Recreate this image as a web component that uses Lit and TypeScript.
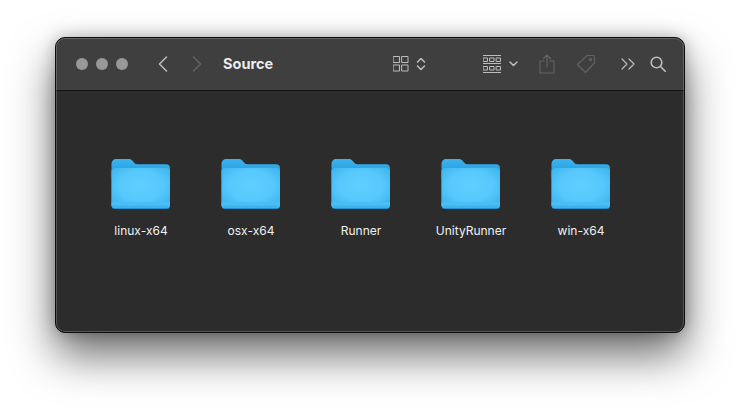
import { LitElement, html, css, svg } from "lit";
import { customElement } from "lit/decorators.js";

const folders = ["linux-x64", "osx-x64", "Runner", "UnityRunner", "win-x64"];

@customElement("app-root")
export class AppRoot extends LitElement {
  static styles = css`
    :host { display: block; width: 740px; height: 406px; background: #fff; overflow: hidden; font-family: Inter, "Liberation Sans", sans-serif; }
    .page { box-sizing: border-box; width: 740px; height: 406px; padding: 37px 55px 0; }
    .window {
      position: relative; box-sizing: border-box; width: 630px; height: 296px; border-radius: 10px; background: #2c2c2c; overflow: hidden;
      border: 1px solid #0c0c0c;
      box-shadow: 0 22px 44px rgba(0,0,0,.58), 0 0 16px rgba(0,0,0,.26);
      display: flex; flex-direction: column;
    }
    .window::after { content: ""; position: absolute; inset: 0; border-radius: 9px; box-shadow: inset 0 0 0 1px rgba(255,255,255,.2); pointer-events: none; }
    .bar {
      height: 52px; background: #3f3f3f; border-bottom: 1px solid #121212;
      display: flex; align-items: center; padding-left: 20px; flex: none;
    }
    .lights { display: flex; gap: 8px; margin-right: 30px; }
    .lights i { width: 12px; height: 12px; border-radius: 50%; background: #989898; display: block; }
    svg { display: block; flex: none; fill: none; stroke-linecap: round; stroke-linejoin: round; }
    .on { stroke: #bdbdbd; }
    .off { stroke: #626262; }
    .title { font-size: 14.5px; font-weight: 700; color: #ececec; width: 170px; margin-left: 21px; line-height: 16px; }
    .files { flex: 1; display: grid; grid-template-columns: repeat(5, 110px); align-content: start; padding: 67px 0 0 30px; }
    .file { display: flex; flex-direction: column; align-items: center; gap: 14px; }
    .file span { font-size: 12px; font-weight: 400; line-height: 14px; color: #f0f0f0; }
  `;

  private folder(i: number) {
    return html`<svg width="60" height="52" viewBox="0 0 60 52">
      <defs>
        <linearGradient id="ft${i}" x1="0" y1="0" x2="0" y2="1"><stop offset="0" stop-color="#3db4ee"/><stop offset="1" stop-color="#1c97da"/></linearGradient>
        <radialGradient id="ff${i}" cx=".5" cy=".45" r=".62"><stop offset="0" stop-color="#5fceff"/><stop offset=".6" stop-color="#58c9fd"/><stop offset="1" stop-color="#40b6ef"/></radialGradient>
      </defs>
      <path d="M.5 6.500C.5 3 2.500 1 5.500 1h12c2 0 3 .6 4.200 2l1.800 2c.8.8 1.500 1.200 2.800 1.200H55c2.500 0 4 1.500 4 4V20H.5z" fill="url(#ft${i})"/>
      <rect x=".5" y="10" width="58.500" height="41" rx="3.500" fill="#1f90d0"/>
      <rect x=".5" y="10" width="58.500" height="40" rx="3.500" fill="url(#ff${i})"/>
      <path d="M.5 44h58.500v2.500c0 2-1.500 3.500-3.500 3.500H4C2 50 .5 48.500 .5 46.500z" fill="#4abef6"/>
      <path d="M.5 47.500h58.500c-.3 1.500-1.700 2.500-3.500 2.500H4C2.200 50 .8 49 .5 47.500z" fill="#3fb2ec"/>
    </svg>`;
  }

  private icon(w: number, h: number, cls: string, sw: number, body: unknown, ml: number) {
    return html`<svg class=${cls} style="margin-left:${ml}px" width=${w} height=${h} viewBox="0 0 ${w} ${h}" stroke-width=${sw}>${body}</svg>`;
  }

  render() {
    return html`<div class="page"><div class="window">
      <div class="bar">
        <div class="lights"><i></i><i></i><i></i></div>
        ${this.icon(10, 16, "on", 1.5, svg`<path d="M8.500 1 1.500 8l7 7"/>`, 0)}
        ${this.icon(10, 16, "off", 1.5, svg`<path d="M1.500 1l7 7-7 7"/>`, 24)}
        <div class="title">Source</div>
        ${this.icon(16, 16, "on", 1, svg`<rect x=".5" y=".5" width="6" height="6"/><rect x="9" y=".5" width="6" height="6"/><rect x=".5" y="9" width="6" height="6"/><rect x="9" y="9" width="6" height="6"/>`, 0)}
        ${this.icon(10, 16, "on", 1.5, svg`<path d="M1.500 6 5 2.500 8.500 6M1.500 10 5 13.500 8.500 10"/>`, 7)}
        ${this.icon(18, 18, "on", 1, svg`<path d="M0 .5h18M0 8.500h18M0 17.500h18"/><rect x=".5" y="3" width="4" height="3.500"/><rect x="7" y="3" width="4" height="3.500"/><rect x="13.500" y="3" width="4" height="3.500"/><rect x=".5" y="11.500" width="4" height="3.500"/><rect x="7" y="11.500" width="4" height="3.500"/><rect x="13.500" y="11.500" width="4" height="3.500"/>`, 57)}
        ${this.icon(9, 6, "on", 1.5, svg`<path d="M1 1l3.500 3.500L8 1"/>`, 8)}
        ${this.icon(16, 20, "off", 1.2, svg`<path d="M5 7H1v12h14V7h-4M8 13V1M4.500 4.500 8 1l3.500 3.500"/>`, 21)}
        ${this.icon(20, 20, "off", 1.2, svg`<path d="M11 1.500h6c.8 0 1.500.7 1.500 1.500v6L9.500 18.500 1.500 10.500z"/><circle cx="14.500" cy="5.500" r="1.200"/>`, 21)}
        ${this.icon(14, 12, "on", 1.2, svg`<path d="M1 1l5 5-5 5M8 1l5 5-5 5"/>`, 25)}
        ${this.icon(16, 16, "on", 1.6, svg`<circle cx="6.500" cy="6.500" r="5.300"/><path d="M10.500 10.500l4.700 4.700"/>`, 15)}
      </div>
      <div class="files">
        ${folders.map((f, i) => html`<div class="file">${this.folder(i)}<span>${f}</span></div>`)}
      </div>
    </div></div>`;
  }
}
